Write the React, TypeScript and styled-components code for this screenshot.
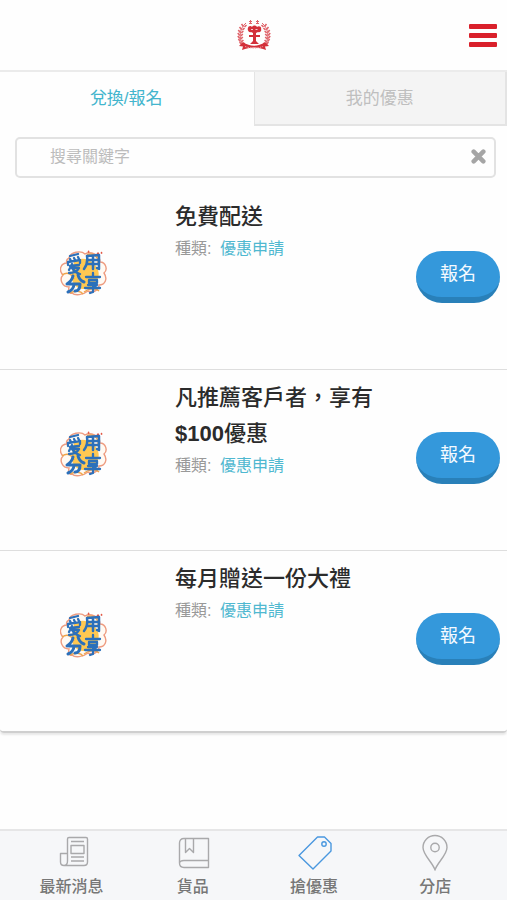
import React, { useState } from 'react';
import styled, { createGlobalStyle } from 'styled-components';

const GlobalStyle = createGlobalStyle`
  * { box-sizing: border-box; }
  body {
    margin: 0;
    background: #fefefe;
    color: #2b2b2b;
    font-family: "Liberation Sans", "Noto Sans CJK TC", sans-serif;
  }
  button, input { font-family: inherit; }
`;

const Page = styled.div`
  min-height: 100vh;
  display: flex;
  flex-direction: column;
`;

const Header = styled.header`
  height: 72px;
  display: grid;
  grid-template-columns: 1fr auto 1fr;
  align-items: center;
  padding: 0 10px;
  border-bottom: 2px solid #ebebeb;
`;

const Brand = styled.a`
  grid-column: 2;
  display: flex;
`;

const MenuButton = styled.button`
  justify-self: end;
  width: 28px;
  padding: 0;
  border: 0;
  background: none;
  display: grid;
  gap: 4px;
  cursor: pointer;
`;

const MenuBar = styled.span`
  height: 5px;
  border-radius: 1px;
  background: #d9202b;
`;

const Tabs = styled.div`
  display: grid;
  grid-template-columns: 1fr 1fr;
`;

const Tab = styled.button<{ $active: boolean }>`
  height: 54px;
  padding: 0 0 4px;
  border: solid ${p => (p.$active ? 'transparent' : '#e4e4e4')};
  border-width: 0 2px 2px 1px;
  background: ${p => (p.$active ? '#fefefe' : '#f4f4f4')};
  color: ${p => (p.$active ? '#43b5cd' : '#bfbfbf')};
  font-size: 17px;
  cursor: pointer;
`;

const SearchBox = styled.form`
  display: flex;
  align-items: center;
  height: 41px;
  margin: 11px 11px 10px 15px;
  padding: 0 8px 2px 33px;
  border: 2px solid #e2e2e2;
  border-radius: 5px;
`;

const SearchInput = styled.input`
  flex: 1;
  min-width: 0;
  padding: 0;
  border: 0;
  outline: 0;
  background: none;
  color: #777;
  font-size: 16px;
  &::placeholder { color: #bcbcbc; opacity: 1; }
`;

const ClearButton = styled.button`
  display: flex;
  padding: 0;
  border: 0;
  background: none;
  cursor: pointer;
`;

const OfferList = styled.ul`
  margin: 0;
  padding: 0;
  list-style: none;
  border-bottom: 2px solid #cfcfcf;
  border-radius: 0 0 4px 4px;
  box-shadow: 0 2px 2px #e8e8e8;
`;

const Offer = styled.li`
  display: grid;
  grid-template-columns: 167px 1fr 84px;
  column-gap: 8px;
  min-height: 181px;
  padding: 0 7px 0 0;
  border-top: 1px solid #dedede;
  &:first-child { border-color: transparent; }
`;

const OfferImage = styled.div`
  display: flex;
  justify-content: center;
  align-self: center;
  padding-bottom: 12px;
`;

const OfferText = styled.div`
  padding-top: 10px;
`;

const OfferTitle = styled.h2`
  margin: 0;
  font-size: 22px;
  font-weight: 500;
  line-height: 36px;
`;

const Amount = styled.span`
  font-weight: 700;
`;

const OfferKind = styled.p`
  margin: 0;
  color: #999;
  font-size: 16px;
  line-height: 28px;
`;

const KindLink = styled.a`
  margin-left: 4px;
  color: #4fb8d0;
  text-decoration: none;
`;

const JoinButton = styled.button`
  align-self: center;
  height: 52px;
  margin-bottom: 4px;
  padding: 0;
  border: 0;
  border-bottom: 6px solid #2980b9;
  border-radius: 26px;
  background: #3498db;
  color: #f4faff;
  font-size: 18px;
  line-height: 24px;
  cursor: pointer;
`;

const BottomNav = styled.nav`
  display: grid;
  grid-template-columns: repeat(4, 1fr);
  margin-top: auto;
  height: 71px;
  padding: 0 11px;
  border-top: 2px solid #e6e6e7;
  background: #f6f7f9;
`;

const NavItem = styled.a`
  display: flex;
  flex-direction: column;
  align-items: center;
  gap: 3px;
  padding-top: 1px;
  color: #777;
  font-size: 16px;
  font-weight: 500;
  line-height: 24px;
  text-decoration: none;
`;

function BrandLogo() {
  const leaves = [0, 1, 2, 3, 4, 5, 6];
  return (
    <svg width="34" height="32" viewBox="0 0 34 32" role="img" aria-label="首頁">
      {[1, -1].map(side => (
        <g key={side} transform={side === 1 ? undefined : 'translate(34 0) scale(-1 1)'} fill="none" stroke="#e0656c">
          <path d="M9 4C3 9 1 18 6 26" strokeWidth="1" />
          {leaves.map(n => {
            const y = 6 + n * 3;
            const x = [6.5, 4.5, 3.3, 2.8, 2.8, 3.4, 4.6][n];
            return <path key={n} d={`M${x - 2} ${y - 1}l2 2.500M${x + 3} ${y}l-2 2`} strokeWidth="1.6" />;
          })}
        </g>
      ))}
      <g fill="none" stroke="#e0656c" strokeWidth="1">
        <path d="M12 2.500h3M13.500 1v4M12 4.500h3M19 2.500h3M20.500 1v4M19 4.500h3" />
      </g>
      <g fill="#d3303a">
        <path d="M11 9c0-2 3-3 4-1 1-2 4-2 5 0 2-2 5 0 4 2 1 2-1 4-3 3l-2 1v2h4v2h-4v4l3 3h-9l3-3v-4h-4v-2h4v-2l-2-1c-2 1-4-2-3-4z" />
        <path d="M2 27l4-4c7 5 15 5 22 0l4 4-4 .5 1 3.500c-8-3.500-16-3.500-24 0l1-3.500z" />
      </g>
      <path d="M14 10.500h2M18.500 10.500h2" stroke="#f6c6c9" strokeWidth="1" />
      <path d="M8 27.500c6 2 12 2 18 0" fill="none" stroke="#ee9ba1" strokeWidth="1" strokeDasharray="1.5 1" />
    </svg>
  );
}

function OfferLogo() {
  return (
    <svg width="48" height="48" viewBox="0 0 48 48" role="img" aria-label="愛用分享">
      <path
        d="M9 9C10 3 21 1 25 5c5-3 15 0 15 8 6 0 8 8 4 11 4 6 1 12-5 12 0 6-7 8-11 6-5 4-13 5-16 2-3 1-4-2-3-6-7 0-10-8-6-12-5-5-2-12 4-12-1-2 0-4 2-5z"
        fill="#fffaf3" stroke="#ee9c80" strokeWidth="1.4"
      />
      <path d="M14 13c9-8 22 0 24 8 3 9-4 18-13 19-10 1-15-9-13-16z" fill="#ffc852" />
      <path d="M2 26c6-4 11 0 12 4M27 6c6-3 12 2 11 8M10 44c5-3 11-2 13 1M24 43c5-4 12-4 15-1" fill="none" stroke="#f0a54b" strokeWidth="1.4" />
      <path d="M37 4c1-2 3 0 2 2-2 0-3-1-2-2zM41 3c1-1 2 1 1 2-1 0-2-1-1-2zM28 2c1-1 2 0 1 2-1 0-2-1-1-2z" fill="#e25845" />
      <g fill="none" stroke="#2c70ba" strokeLinecap="round" strokeLinejoin="round">
        <path d="M10 7l8-2M10 10l1 2M14 9l1 2M18 8l1 2M8 16v-3l12-2v3M10 17l9-1M12 15l-3 6M12 19h7c-2 4-6 5-10 5M12 19c2 3 4 5 8 6" strokeWidth="2.3" />
        <path d="M27 7c1 6 0 9-3 13M27 7l12-1v14l-2-1M27 11h12M27 15h12M33 7v13" strokeWidth="2.5" />
        <path d="M13 27c-1 4-3 6-6 8M18 26c1 4 3 6 6 7M9 35h11c0 5-2 7-5 7M14 35c0 4-3 7-6 8" strokeWidth="3" />
        <path d="M33 24v3M26 28h14M29 31h8v3h-8zM28 36h9l-4 2M25 39h15M33 38v5l-3 1" strokeWidth="2.3" />
      </g>
    </svg>
  );
}

function ClearIcon() {
  return (
    <svg width="15" height="15" viewBox="0 0 14 14" aria-hidden="true">
      <path d="M2.500 2.500l9 9M11.500 2.500l-9 9" stroke="#a5a5a5" strokeWidth="4.2" strokeLinecap="round" />
    </svg>
  );
}

const navPaths = {
  news: (
    <g transform="translate(4 0)">
      <path d="M10.500 29V7q0-1.500 1.500-1.500h17q1.500 0 1.500 1.500v23q0 3.500-3.500 3.500H7q-3.500 0-3.500-3.500v-8.500h7M10.500 29q0 4.500-3.500 4.500" />
      <path d="M14 9.500h13M14 13.500h13v8H14zM14 25h13M14 29h13" />
    </g>
  ),
  goods: (
    <path d="M34.500 6.500H10q-4.500 0-4.500 4.500v20q0 4.500 4.500 4.500h24.500zM34.500 28.500H10q-4.500 0-4.500 3M11.500 6.500v14l4-4 4 4v-14" />
  ),
  deals: (
    <>
      <path d="M4 23.500L22.500 5h7l6.500 6.500v7.500L18 37z" />
      <circle cx="29" cy="12" r="2.200" />
    </>
  ),
  stores: (
    <>
      <path d="M19 38C17 31 7 23 7 15.500a12 12 0 0 1 24 0C31 23 21 31 19 38z" />
      <circle cx="19" cy="15.500" r="4.200" />
    </>
  ),
};

type NavKey = keyof typeof navPaths;

function NavIcon({ name }: { name: NavKey }) {
  return (
    <svg width="38" height="40" viewBox="0 0 38 40" fill="none" aria-hidden="true"
      stroke={name === 'deals' ? '#4a98df' : '#a9a9ab'} strokeWidth="1.4" strokeLinejoin="round">
      {navPaths[name]}
    </svg>
  );
}

const navItems: { key: NavKey; label: string }[] = [
  { key: 'news', label: '最新消息' },
  { key: 'goods', label: '貨品' },
  { key: 'deals', label: '搶優惠' },
  { key: 'stores', label: '分店' },
];

const offers: { id: string; title: React.ReactNode }[] = [
  { id: 'delivery', title: '免費配送' },
  { id: 'referral', title: <>凡推薦客戶者，享有<Amount>$100</Amount>優惠</> },
  { id: 'gift', title: '每月贈送一份大禮' },
];

export default function App() {
  const [tab, setTab] = useState(0);
  const [query, setQuery] = useState('');
  return (
    <Page lang="zh-Hant">
      <GlobalStyle />
      <Header>
        <Brand href="#home"><BrandLogo /></Brand>
        <MenuButton type="button" aria-label="選單"><MenuBar /><MenuBar /><MenuBar /></MenuButton>
      </Header>
      <Tabs role="tablist">
        {['兌換/報名', '我的優惠'].map((label, i) => (
          <Tab key={label} type="button" role="tab" aria-selected={tab === i} $active={tab === i} onClick={() => setTab(i)}>
            {label}
          </Tab>
        ))}
      </Tabs>
      <SearchBox role="search" onSubmit={e => e.preventDefault()}>
        <SearchInput aria-label="搜尋關鍵字" placeholder="搜尋關鍵字" value={query} onChange={e => setQuery(e.target.value)} />
        <ClearButton type="button" aria-label="清除" onClick={() => setQuery('')}><ClearIcon /></ClearButton>
      </SearchBox>
      <OfferList>
        {offers.map(offer => (
          <Offer key={offer.id}>
            <OfferImage><OfferLogo /></OfferImage>
            <OfferText>
              <OfferTitle>{offer.title}</OfferTitle>
              <OfferKind>種類: <KindLink href="#apply">優惠申請</KindLink></OfferKind>
            </OfferText>
            <JoinButton type="button">報名</JoinButton>
          </Offer>
        ))}
      </OfferList>
      <BottomNav>
        {navItems.map(item => (
          <NavItem key={item.key} href={`#${item.key}`} aria-current={item.key === 'deals' ? 'page' : undefined}>
            <NavIcon name={item.key} />
            {item.label}
          </NavItem>
        ))}
      </BottomNav>
    </Page>
  );
}
